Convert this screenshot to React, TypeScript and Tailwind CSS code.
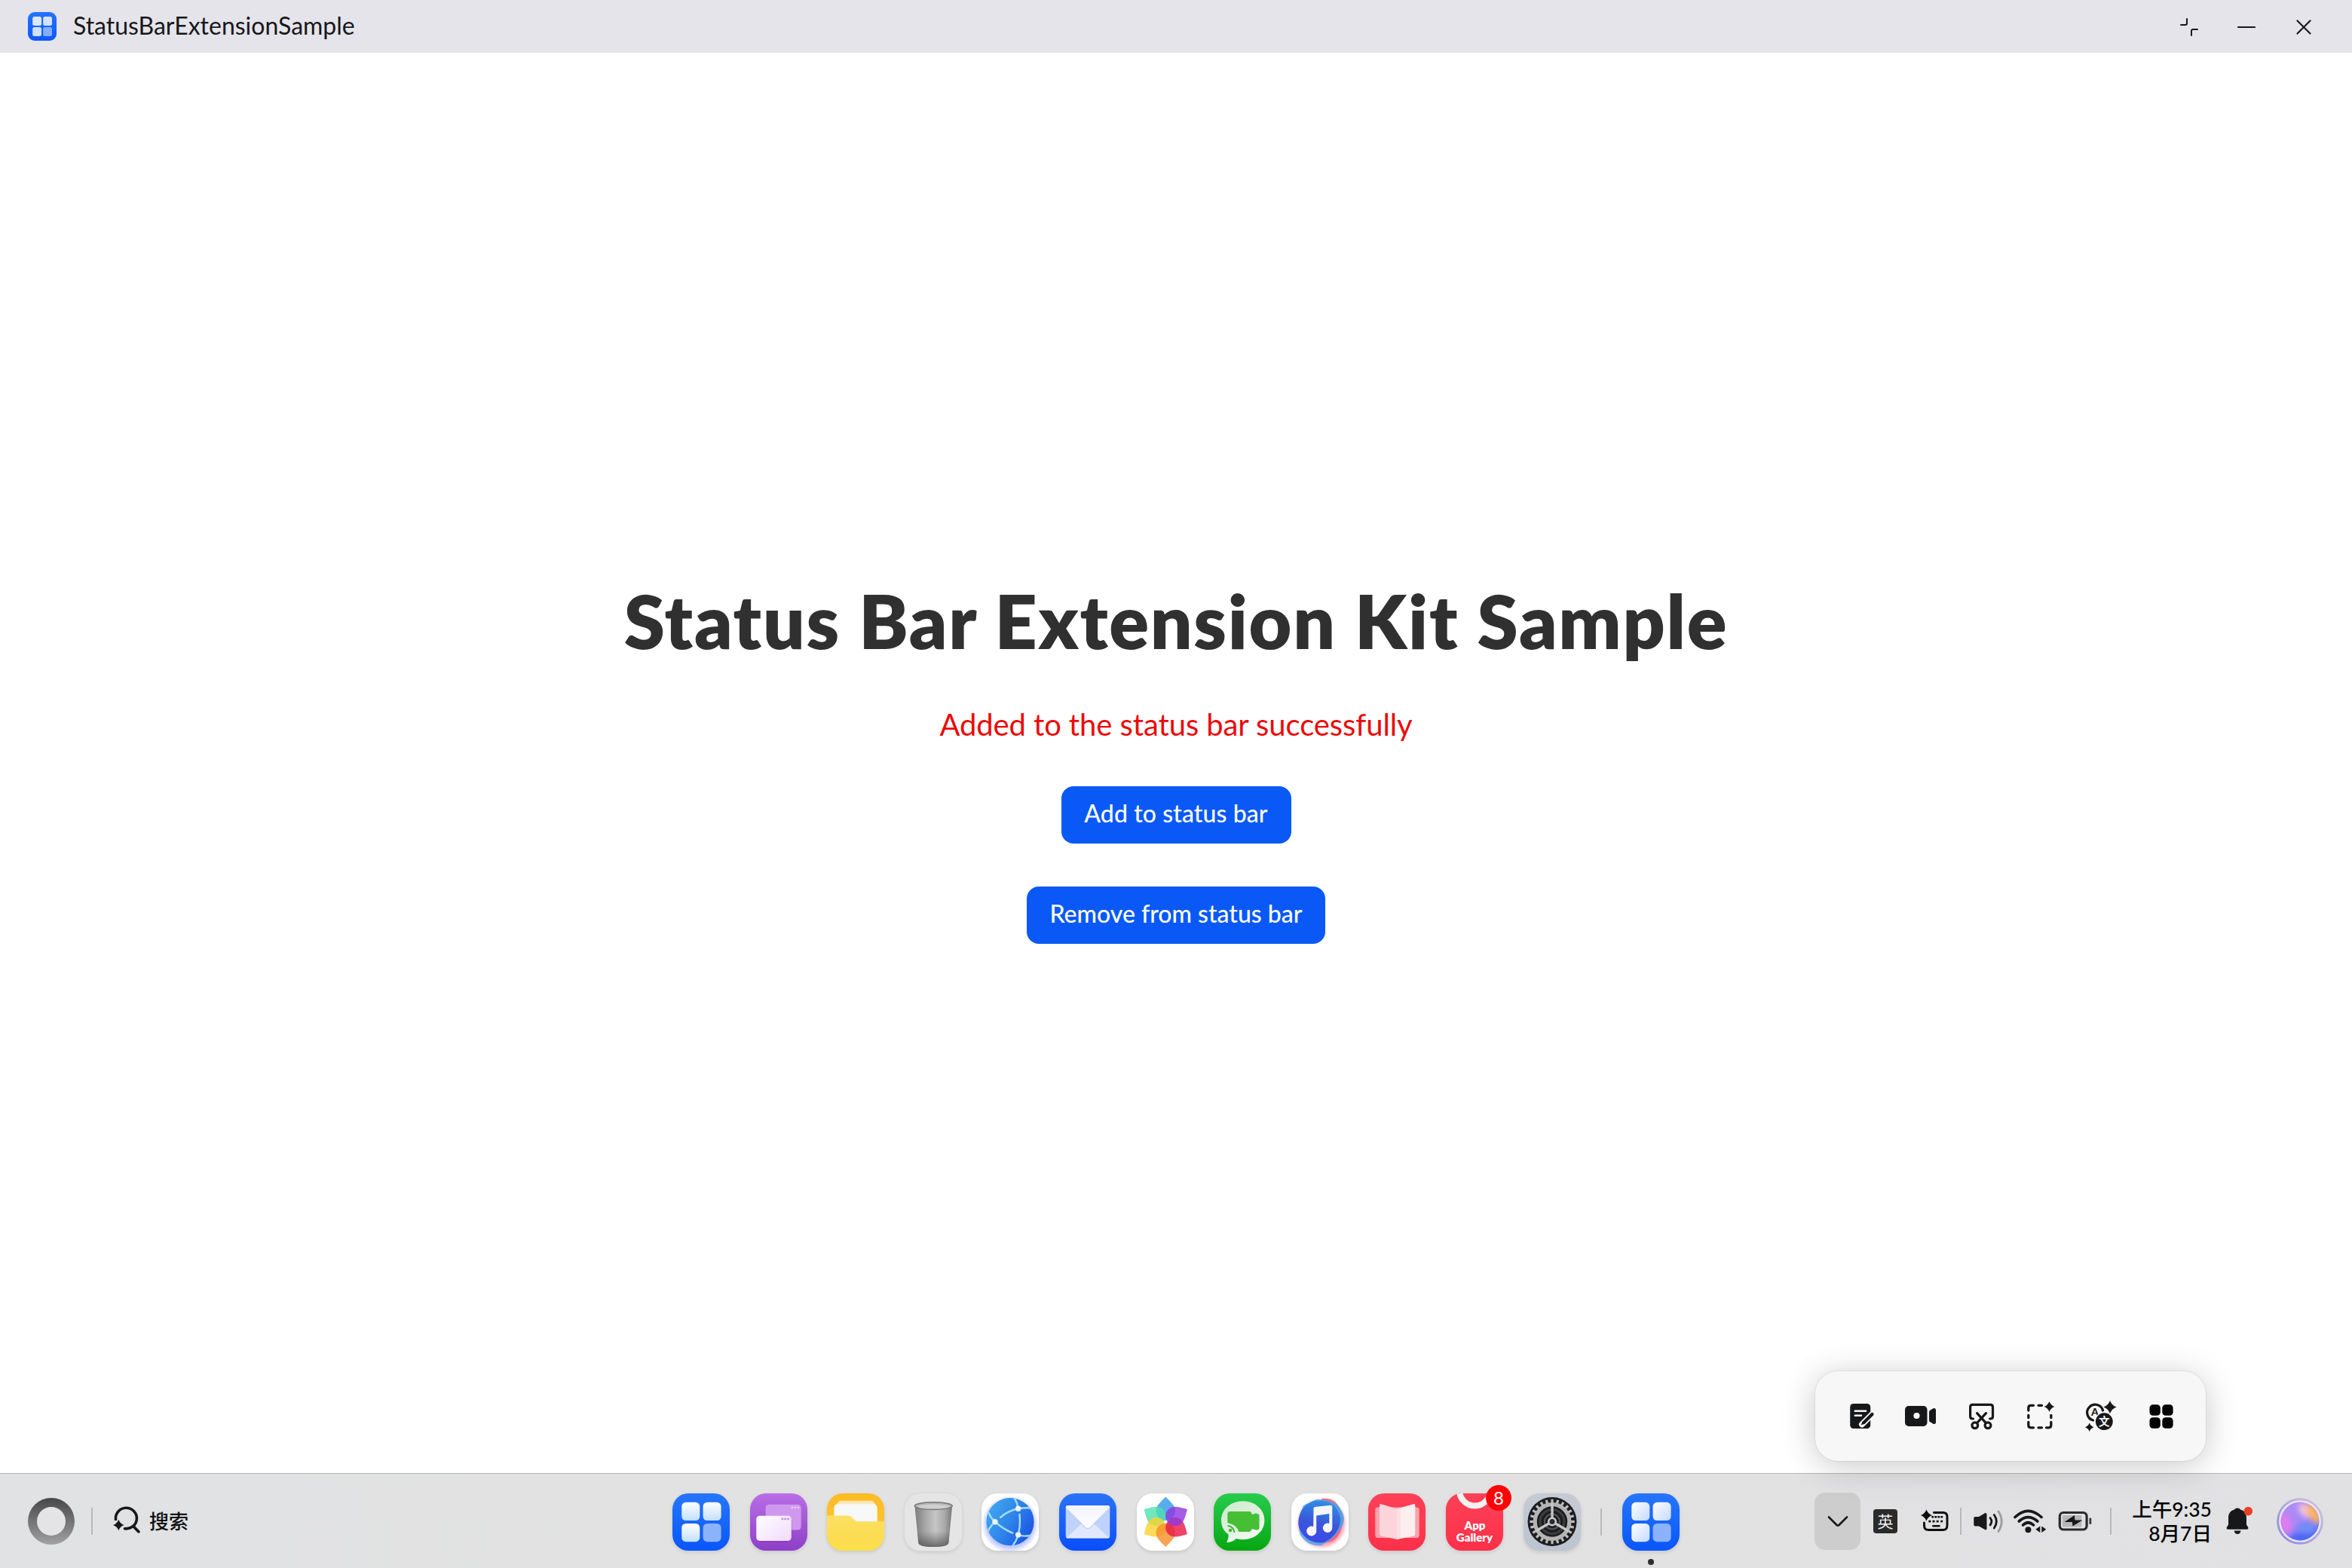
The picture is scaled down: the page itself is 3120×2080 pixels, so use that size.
import type { ReactNode } from "react";

const INK = "#17181a";

/** Four-pointed star centred on (x, y). */
function Sparkle({ x, y, r, fill = INK }: { x: number; y: number; r: number; fill?: string }) {
  const k = r * 0.26;
  return (
    <path
      fill={fill}
      d={`M${x} ${y - r}Q${x + k} ${y - k} ${x + r} ${y}Q${x + k} ${y + k} ${x} ${y + r}Q${x - k} ${y + k} ${x - r} ${y}Q${x - k} ${y - k} ${x} ${y - r}Z`}
    />
  );
}

function Divider({ className = "" }: { className?: string }) {
  return <div className={`h-9 w-0.5 shrink-0 bg-[#b9b9bc] ${className}`} />;
}

/* ---------- App tiles ---------- */

function Tile({ className, children }: { className: string; children: ReactNode }) {
  return (
    <div className={`size-[76px] shrink-0 overflow-hidden rounded-[21px] shadow-[0_2px_5px_rgba(0,0,0,0.12)] ${className}`}>
      <svg viewBox="0 0 76 76" className="size-full">
        {children}
      </svg>
    </div>
  );
}

function GridTile({ id, white }: { id: string; white?: boolean }) {
  return (
    <Tile className="bg-linear-to-b from-[#2676fb] to-[#0a55fa]">
      <defs>
        <linearGradient id={id} x1="0" y1="0" x2={white ? "1" : "0"} y2="1">
          <stop offset="0" stopColor="#ffffff" />
          <stop offset="1" stopColor={white ? "#c4d9ff" : "#c3dffb"} />
        </linearGradient>
      </defs>
      <rect x="12.3" y="11.8" width="24" height="24.2" rx="5.5" fill={`url(#${id})`} />
      <rect x="40.6" y="11.8" width="24" height="24.2" rx="5.5" fill={`url(#${id})`} />
      <rect x="12.3" y="40" width="24" height="24.2" rx="5.5" fill={`url(#${id})`} />
      <rect x="40.6" y="40" width="24" height="24.2" rx="5.5" fill="#8bb2fd" />
    </Tile>
  );
}

function WindowsTile() {
  return (
    <Tile className="bg-linear-to-b from-[#b96ee6] to-[#8d3fc6]">
      <defs>
        <linearGradient id="win" x1="0" y1="0" x2="1" y2="1">
          <stop offset="0" stopColor="#ffffff" />
          <stop offset="1" stopColor="#f0d9fc" />
        </linearGradient>
      </defs>
      <rect x="20.7" y="14.7" width="47" height="33.8" rx="4.5" fill="#cf98ee" />
      {[55.9, 59.9, 63.9].map((x) => (
        <circle key={x} cx={x} cy="18.8" r="1.5" fill="#e6c5f7" />
      ))}
      <rect x="9" y="31.5" width="46.5" height="33.4" rx="4.5" fill="#7a2fb5" opacity="0.35" />
      <rect x="8.3" y="29.7" width="46.5" height="33.4" rx="4.5" fill="url(#win)" />
      {[42.8, 46.7, 50.6].map((x) => (
        <circle key={x} cx={x} cy="33.8" r="1.6" fill="#c98be8" />
      ))}
    </Tile>
  );
}

function FilesTile() {
  return (
    <Tile className="bg-linear-to-b from-[#fdbb22] to-[#fcc93c]">
      <defs>
        <linearGradient id="folder" x1="0" y1="0" x2="0" y2="1">
          <stop offset="0" stopColor="#fde064" />
          <stop offset="0.6" stopColor="#fcdc52" />
          <stop offset="1" stopColor="#fce04a" />
        </linearGradient>
      </defs>
      <path d="M13 14L16 10.5Q17 9.7 18 9.7H59Q60.5 9.7 61 10.5L64 14V30H13Z" fill="#fde6b8" />
      <path d="M9.3 19Q10 14.5 14.5 14.3H61.5Q66 14.5 66.7 19V45H9.3Z" fill="#f8f8f8" />
      <path d="M0 29.5H27Q30.5 29.5 32.5 31.5L37 35.8Q38.5 37.3 41 37.3H76V76H0Z" fill="url(#folder)" />
    </Tile>
  );
}

function TrashTile() {
  return (
    <Tile className="bg-[#e5e5e5] ring-1 ring-[#d9d9d9]">
      <defs>
        <linearGradient id="can" x1="0" y1="0" x2="1" y2="0">
          <stop offset="0" stopColor="#7b7b7b" />
          <stop offset="0.25" stopColor="#a3a3a3" />
          <stop offset="0.55" stopColor="#c6c6c6" />
          <stop offset="0.8" stopColor="#a9a9a9" />
          <stop offset="1" stopColor="#787878" />
        </linearGradient>
        <linearGradient id="canFoot" x1="0" y1="0" x2="0" y2="1">
          <stop offset="0.6" stopColor="#555" stopOpacity="0" />
          <stop offset="1" stopColor="#444" stopOpacity="0.7" />
        </linearGradient>
      </defs>
      <path d="M13.6 18L18.2 65.5Q19 71 38.3 71Q57.6 71 58.4 65.5L63 18Z" fill="url(#can)" />
      <path d="M13.6 18L18.2 65.5Q19 71 38.3 71Q57.6 71 58.4 65.5L63 18Z" fill="url(#canFoot)" />
      <ellipse cx="38.3" cy="16.6" rx="25" ry="4.8" fill="#b5b5b5" stroke="#777" strokeWidth="1.6" />
      <ellipse cx="38.3" cy="17.6" rx="21" ry="3" fill="#cfcfcf" />
    </Tile>
  );
}

function BrowserTile() {
  return (
    <Tile className="bg-white">
      <defs>
        <linearGradient id="globe" x1="0" y1="0.2" x2="1" y2="0.8">
          <stop offset="0" stopColor="#42a9ee" />
          <stop offset="0.5" stopColor="#2f83ea" />
          <stop offset="1" stopColor="#1a4fe3" />
        </linearGradient>
        <radialGradient id="globeGlow">
          <stop offset="0.8" stopColor="#8b9cff" stopOpacity="0.55" />
          <stop offset="1" stopColor="#8b9cff" stopOpacity="0" />
        </radialGradient>
        <clipPath id="globeClip">
          <circle cx="38" cy="37.7" r="31.6" />
        </clipPath>
      </defs>
      <circle cx="38" cy="41" r="38" fill="url(#globeGlow)" />
      <circle cx="38" cy="37.7" r="31.6" fill="url(#globe)" />
      <g clipPath="url(#globeClip)" fill="none" stroke="#9fe0fc" strokeWidth="2.4" strokeLinecap="round">
        <path d="M43 5Q47.5 12 48.7 20.3" />
        <path d="M25 32Q35 23 48.7 20.3Q58 18.5 71 19.8" />
        <path d="M50.4 28Q52 42 48.7 55Q46.5 63 41 70" />
        <path d="M9.5 26Q12.5 33 18 37.7Q28 47 41.3 52.7" />
        <path d="M18 37.7Q11 44 8 52" />
        <path d="M48.7 55Q58 58.5 71 54.5" />
      </g>
      {[[48.7, 20.3], [18, 37.7], [48.7, 55]].map(([x, y]) => (
        <circle key={y} cx={x} cy={y} r="3.7" fill="#eef4f8" />
      ))}
    </Tile>
  );
}

function MailTile() {
  return (
    <Tile className="bg-linear-to-b from-[#2b72f6] to-[#0a4dfb]">
      <defs>
        <linearGradient id="flap" x1="0" y1="0" x2="0" y2="1">
          <stop offset="0" stopColor="#f3f3ff" />
          <stop offset="1" stopColor="#fdfdff" />
        </linearGradient>
      </defs>
      <rect x="8.7" y="17" width="58.6" height="44" rx="3.5" fill="#0736b4" opacity="0.35" />
      <rect x="8.7" y="16" width="58.6" height="43.6" rx="3" fill="#bfd2fb" />
      <path d="M9.5 59L30 40H46L66.5 59Q66 59.6 64.5 59.6H11.5Q10 59.6 9.5 59Z" fill="#dfe8ff" />
      <path d="M8.9 18.3L33.5 45Q38 49 42.5 45L67.1 18.3Z" fill="#8eaef0" opacity="0.55" />
      <path d="M8.7 18.4Q9 16 11.5 16H64.5Q67 16 67.3 18.4L41.5 44.5Q38 47.5 34.5 44.5Z" fill="url(#flap)" />
    </Tile>
  );
}

const PETALS: [number, string][] = [
  [0, "#2f97e8"],
  [300, "#4fe0ae"],
  [240, "#fbd22c"],
  [180, "#f68d2a"],
  [120, "#e81742"],
  [60, "#9036de"],
];

function GalleryTile() {
  return (
    <Tile className="bg-white">
      <g transform="translate(38.3 37.7)">
        {PETALS.map(([a, c]) => (
          <path
            key={a}
            transform={`rotate(${a})`}
            fill={c}
            opacity="0.8"
            d="M-1.3 -32Q0 -33.4 1.3 -32C5 -27.5 12.8 -22 12.8 -14.5C12.8 -7 7 -2 0 -2C-7 -2 -12.8 -7 -12.8 -14.5C-12.8 -22 -5 -27.5 -1.3 -32Z"
          />
        ))}
      </g>
    </Tile>
  );
}

function MeetTile() {
  return (
    <Tile className="bg-linear-to-b from-[#27cc4d] to-[#05a70a]">
      <defs>
        <linearGradient id="bubble" x1="0" y1="0" x2="0.6" y2="1">
          <stop offset="0" stopColor="#cdeccb" />
          <stop offset="0.5" stopColor="#dcf0dc" />
          <stop offset="1" stopColor="#f2faf2" />
        </linearGradient>
      </defs>
      <path
        d="M38.7 10.3C55 10.3 67.4 21.5 67.4 35.7C67.4 50 55 61.2 38.7 61.2Q34 61.2 30 60Q25.5 64.5 18.6 65.2Q17 65 17.8 63.5Q20 60 19.5 54.5C13 50 10 43 10 35.7C10 21.5 22.4 10.3 38.7 10.3Z"
        fill="url(#bubble)"
      />
      <path
        d="M21.5 24H47Q50.3 24 50.7 28L56 26.5Q60.5 27 60.5 29.5V46.5Q60 49 56 48.6L50.7 47Q50 51 46.5 51H33Q31 41.5 18.3 39V27.5Q18.3 24 21.5 24Z"
        fill="#47bf35"
      />
      <path d="M18.5 43Q26.5 44 27.5 52" fill="none" stroke="#3fb832" strokeWidth="2" />
      <circle cx="22" cy="49" r="2.3" fill="#3fb832" />
    </Tile>
  );
}

function MusicTile() {
  return (
    <Tile className="bg-white">
      <defs>
        <linearGradient id="disc" x1="0.6" y1="0" x2="0.4" y2="1">
          <stop offset="0" stopColor="#2f8fe6" />
          <stop offset="0.55" stopColor="#3a55dc" />
          <stop offset="1" stopColor="#3c49e6" />
        </linearGradient>
        <filter id="soft" x="-20%" y="-20%" width="140%" height="140%">
          <feGaussianBlur stdDeviation="2.2" />
        </filter>
      </defs>
      <circle cx="40" cy="40" r="31" fill="#ff5f7c" opacity="0.6" filter="url(#soft)" />
      <path d="M40 7Q58 5 64 20Q72 32 66 48Q60 66 44 65Z" fill="#f2596f" opacity="0.85" />
      <path d="M33 8Q60 8 66 22Q74 34 66 46Q58 60 40 69Q22 71 12 55Q6 38 16 16Z" fill="#3fa6ee" opacity="0.8" />
      <path d="M36 9.5C52 9 62 18 65 32C66 48 55 60 43 65C28 68 13 58 9.5 42C8 24 20 10 36 9.5Z" fill="url(#disc)" />
      <path
        d="M29.5 19.8Q29.7 18.3 31.2 18L52 15.8Q54.3 15.8 54.3 18V45.5A6.2 6.2 0 1 1 50.3 40V27L33.2 29.5V49.5A6.5 6.5 0 1 1 29.2 44Z"
        fill="#f6f6fa"
      />
    </Tile>
  );
}

function ReaderTile() {
  return (
    <Tile className="bg-linear-to-b from-[#fd4157] to-[#fc2f49]">
      <rect x="9.2" y="18.5" width="58.5" height="40.5" rx="3.5" fill="#f9a3ae" />
      <path d="M15 16Q15 13.5 17.5 14.3L38 20.5V61L18 56.8Q15 56 15 53.5Z" fill="#fbd5d9" />
      <path d="M62.3 16Q62.3 13.5 59.8 14.3L38 20.5V61L59.5 56.8Q62.3 56 62.3 53.5Z" fill="#fdeeef" />
      <path d="M38 20.5L43 19V60L38 61Z" fill="#fde0e3" />
    </Tile>
  );
}

function StoreTile() {
  return (
    <div className="relative shrink-0">
      <Tile className="bg-linear-to-b from-[#fd4157] to-[#fc2f49]">
        <path d="M18 -4A20.3 20.3 0 1 0 59 -4" fill="none" stroke="#f6f1f1" strokeWidth="8" />
        <g fill="#ffffff" fontFamily="Lato, sans-serif" fontWeight="800" fontSize="15" textAnchor="middle">
          <text x="38.5" y="47.5">App</text>
          <text x="38" y="63.5">Gallery</text>
        </g>
      </Tile>
      <span className="absolute -top-[11px] left-[53px] flex size-[34px] items-center justify-center rounded-full bg-[#fb0606] text-[24px] leading-none text-white">
        8
      </span>
    </div>
  );
}

function SettingsTile() {
  const teeth = Array.from({ length: 24 }, (_, i) => i * 15);
  return (
    <Tile className="bg-linear-to-b from-[#c6cbd3] to-[#bcc4cf]">
      <circle cx="38" cy="37.5" r="32.5" fill="#1d1e20" />
      {teeth.map((a) => (
        <rect key={a} x="36.4" y="7.8" width="3.2" height="6" fill="#bdbdbd" transform={`rotate(${a} 38 37.5)`} />
      ))}
      <circle cx="38" cy="37.5" r="22.8" fill="none" stroke="#b4b4b4" strokeWidth="5.2" />
      <circle cx="38" cy="37.5" r="16" fill="none" stroke="#3c3d40" strokeWidth="3" />
      <circle cx="38" cy="37.5" r="10" fill="none" stroke="#55565a" strokeWidth="2" />
      {[0, 120, 240].map((a) => (
        <path key={a} d="M38 32V13" stroke="#c6c6c6" strokeWidth="3.4" transform={`rotate(${a} 38 37.5)`} />
      ))}
      <circle cx="38" cy="37.5" r="4.8" fill="#2a2b2d" stroke="#c9c9c9" strokeWidth="2.6" />
    </Tile>
  );
}

/* ---------- Window chrome ---------- */

function TitleBar() {
  return (
    <header className="flex h-[70px] shrink-0 items-center bg-[#e5e4ea] pr-[52px] pl-[37px]">
      <div className="size-[38px] overflow-hidden rounded-[9px] bg-linear-to-b from-[#2673fb] to-[#0d57f9]">
        <svg viewBox="0 0 38 38" className="size-full">
          <rect x="6.2" y="6" width="11.8" height="12" rx="2.5" fill="#dbe8ff" />
          <rect x="20.2" y="6" width="11.8" height="12" rx="2.5" fill="#d3e2ff" />
          <rect x="6.2" y="20" width="11.8" height="12" rx="2.5" fill="#cfe0ff" />
          <rect x="20.2" y="20" width="11.8" height="12" rx="2.5" fill="#85adfd" />
        </svg>
      </div>
      <h2 className="ml-[22px] pb-[3px] text-[32px] leading-10 text-[#18181b]">StatusBarExtensionSample</h2>
      <div className="ml-auto flex items-center gap-[52px] pt-0.5">
        <svg viewBox="0 0 24 24" className="size-6" fill="none" stroke={INK} strokeWidth="2" strokeLinecap="round" strokeLinejoin="round">
          <path d="M9 1V7Q9 9 7 9H1" />
          <path d="M15 23V17Q15 15 17 15H23" />
        </svg>
        <svg viewBox="0 0 24 24" className="size-6" stroke={INK} strokeWidth="2.2" strokeLinecap="round">
          <path d="M1 12H23" />
        </svg>
        <svg viewBox="0 0 24 24" className="size-6" stroke={INK} strokeWidth="2.2" strokeLinecap="round">
          <path d="M3.5 3.5L20.5 20.5M20.5 3.5L3.5 20.5" />
        </svg>
      </div>
    </header>
  );
}

/* ---------- Status bar extension tray ---------- */

function TrayIcon({ children }: { children: ReactNode }) {
  return (
    <svg viewBox="0 0 80 80" className="size-20 shrink-0">
      {children}
    </svg>
  );
}

function Tray() {
  return (
    <div className="absolute right-[194px] bottom-[142px] flex h-[119px] w-[518px] items-center rounded-[30px] bg-[#f7f7f7] pl-5 shadow-[0_6px_44px_rgba(0,0,0,0.22),0_0_1px_1px_rgba(0,0,0,0.06)]">
      <TrayIcon>
        <rect x="26.2" y="23" width="27" height="33" rx="4.5" fill={INK} />
        <path d="M32.8 32.7H47M32.8 38.7H41" stroke="#f7f7f7" strokeWidth="2.6" strokeLinecap="round" />
        <path d="M55.5 37L42 50.5" stroke="#f7f7f7" strokeWidth="8" strokeLinecap="round" />
        <path d="M55.5 37L44.5 48" stroke={INK} strokeWidth="4.2" strokeLinecap="round" />
        <path d="M42.7 46.5L46 49.5L40.5 51.6Z" fill={INK} />
      </TrayIcon>
      <TrayIcon>
        <rect x="19" y="26" width="29.5" height="27" rx="5" fill={INK} />
        <circle cx="34.5" cy="39" r="4.1" fill="#f7f7f7" />
        <path d="M51 34Q51 32.8 52 32L56.5 29.2Q60 28 60 31.5V47.5Q60 51 56.5 49.8L52 47Q51 46.3 51 45Z" fill={INK} />
      </TrayIcon>
      <TrayIcon>
        <g fill="none" stroke={INK} strokeWidth="3.2" strokeLinecap="round">
          <path d="M29.5 43H28.5Q25.6 43 25.6 40V27.5Q25.6 24.4 28.6 24.4H52.5Q55.5 24.4 55.5 27.5V40Q55.5 43 52.6 43H51.6" />
          <path d="M46.5 35.7L34.5 48.7M34.6 35.7L46.4 48.7" />
          <circle cx="31.8" cy="51.8" r="3.9" />
          <circle cx="49" cy="51.8" r="3.9" />
        </g>
      </TrayIcon>
      <TrayIcon>
        <g fill="none" stroke={INK} strokeWidth="3.3" strokeLinecap="round">
          <path d="M22.8 32V28.5Q22.8 25.3 26 25.3H29.5" />
          <path d="M36 25.3H40.5M22.8 38.3V41.7M52.8 38.3V41.7M36 54.8H40.5" />
          <path d="M22.8 47.5V51.6Q22.8 54.8 26 54.8H29.5" />
          <path d="M46.5 54.8H49.6Q52.8 54.8 52.8 51.6V47.5" />
        </g>
        <Sparkle x={50.5} y={27} r={7} />
      </TrayIcon>
      <TrayIcon>
        <path d="M28.5 45A10.6 10.6 0 1 1 41.5 32" fill="none" stroke={INK} strokeWidth="3.2" strokeLinecap="round" />
        <text x="31" y="39.3" textAnchor="middle" fontFamily="Lato, sans-serif" fontWeight="900" fontSize="14" fill={INK}>A</text>
        <circle cx="43.3" cy="46.7" r="12.6" fill="#f7f7f7" />
        <circle cx="43.3" cy="46.7" r="11.4" fill={INK} />
        <text x="43.3" y="52" textAnchor="middle" fontFamily="'Noto Sans CJK SC', sans-serif" fontWeight="700" fontSize="14.5" fill="#f7f7f7">文</text>
        <Sparkle x={51} y={27.5} r={8.6} />
        <Sparkle x={23.7} y={54.3} r={5.8} />
      </TrayIcon>
      <TrayIcon>
        {[[23.5, 24.3], [40.3, 24.3], [23.5, 41.3], [40.3, 41.3]].map(([x, y]) => (
          <rect key={`${x}-${y}`} x={x} y={y} width="14.3" height="14.5" rx="4.5" fill="#000000" />
        ))}
      </TrayIcon>
    </div>
  );
}

/* ---------- Taskbar ---------- */

function SearchArea() {
  return (
    <div className="flex items-center pl-[37px]">
      <div className="flex size-[62px] items-center justify-center rounded-full bg-linear-to-b from-[#48484a] to-[#a2a2a4]">
        <div className="size-[38px] rounded-full bg-[#e4e4e6]" />
      </div>
      <Divider className="ml-[22px]" />
      <svg viewBox="0 0 40 40" className="-mt-px ml-[25px] size-10">
        <path d="M5.5 18.5A14 13.8 0 1 1 17.5 30.7" fill="none" stroke={INK} strokeWidth="3.6" strokeLinecap="round" />
        <path d="M29.2 28L35.8 34.8" stroke={INK} strokeWidth="3.8" strokeLinecap="round" />
        <Sparkle x={9.3} y={26} r={7.3} />
      </svg>
      <span className="ml-2.5 text-[26px] leading-9 font-medium text-[#101012]">搜索</span>
    </div>
  );
}

function Dock() {
  return (
    <div className="flex items-center gap-[26.6px] pt-0.5">
      <GridTile id="gridA" />
      <WindowsTile />
      <FilesTile />
      <TrashTile />
      <BrowserTile />
      <MailTile />
      <GalleryTile />
      <MeetTile />
      <MusicTile />
      <ReaderTile />
      <StoreTile />
      <SettingsTile />
      <Divider />
      <div className="relative">
        <GridTile id="gridB" white />
        <span className="absolute -bottom-[19px] left-[34px] size-2 rounded-full bg-[#2e2e2e]" />
      </div>
    </div>
  );
}

function StatusArea() {
  return (
    <div className="flex items-center">
      <button className="flex h-[76px] w-[61px] shrink-0 items-center justify-center rounded-[14px] bg-[#cdcdcd]">
        <svg viewBox="0 0 30 20" className="h-5 w-[30px]" fill="none" stroke={INK} strokeWidth="2.6" strokeLinecap="round" strokeLinejoin="round">
          <path d="M3 4.5L13.5 15Q15 16.3 16.5 15L27 4.5" />
        </svg>
      </button>
      <span className="ml-[17px] flex size-8 shrink-0 items-center justify-center rounded-[4px] bg-[#2a2a2b] text-[21px] leading-none text-[#f0f0f0]">
        英
      </span>
      <svg viewBox="0 0 40 40" className="ml-[30px] size-10 shrink-0">
        <path d="M18.5 8.5H30.5Q36 8.5 36 14V25.5Q36 31.5 30.5 31.5H11Q5.5 31.5 5.5 25.5V22" fill="none" stroke="#0c0c0d" strokeWidth="2.9" strokeLinecap="round" />
        <g fill="#0c0c0d">
          {[16.8, 20.8, 24.8, 28.8].map((x) => (
            <rect key={x} x={x - 1.4} y="13" width="2.8" height="2.6" rx="0.6" />
          ))}
          {[12.8, 18, 23.2, 28.6].map((x) => (
            <rect key={x} x={x - 1.5} y="18.8" width="3" height="2.6" rx="0.6" />
          ))}
        </g>
        <path d="M17.3 26.3H25.5" stroke="#0c0c0d" strokeWidth="2.4" strokeLinecap="round" />
        <Sparkle x={8.4} y={12} r={7.6} fill="#0c0c0d" />
      </svg>
      <Divider className="ml-[13px]" />
      <svg viewBox="0 0 44 40" className="ml-3.5 h-10 w-11 shrink-0">
        <path d="M2.3 16Q2.3 14 4.3 14H9L17 9.3Q19.5 8.2 19.5 11V29.5Q19.5 32.3 17 31L9 26.5H4.3Q2.3 26.5 2.3 24.5Z" fill={INK} />
        <g fill="none" stroke={INK} strokeWidth="2.8" strokeLinecap="round">
          <path d="M24 15.5Q27.8 20.3 24 25" />
          <path d="M29.3 11.5Q35.5 20.3 29.3 29" />
          <path d="M35 7Q43.5 20.3 35 33.5" stroke="#9c9c9e" />
        </g>
      </svg>
      <svg viewBox="0 0 48 40" className="ml-2.5 h-10 w-12 shrink-0">
        <g fill="none" stroke={INK} strokeWidth="3.7" strokeLinecap="round">
          <path d="M3 14.5Q20.3 -1.8 38 14.5" />
          <path d="M8.3 20Q20.3 9.2 32.8 20" />
          <path d="M13.5 25Q20.3 18.5 27.5 25" />
        </g>
        <circle cx="20.4" cy="31.3" r="4" fill={INK} />
        <path d="M36.3 26.5V35L30.3 30.7ZM38.3 26.5V35L44.3 30.7Z" fill={INK} />
      </svg>
      <svg viewBox="0 0 50 40" className="ml-2.5 h-10 w-[50px] shrink-0">
        <rect x="4.3" y="8.5" width="35.8" height="22.5" rx="5" fill="none" stroke="#2a2a2c" strokeWidth="3.2" />
        <rect x="7.8" y="12" width="25.5" height="15.5" rx="1" fill="#b7b7b8" />
        <path d="M23.8 12L10.5 21H20.8L21.5 26.5L34.5 18.5H24.5Z" fill={INK} />
        <rect x="43.4" y="15.5" width="2.9" height="8.5" rx="1.2" fill="#3c3c3e" />
      </svg>
      <Divider className="ml-[21px]" />
      <div className="ml-[25px] w-[108px] shrink-0 text-right text-[26.5px] leading-8 font-medium whitespace-nowrap text-black">
        <p>上午9:35</p>
        <p>8月7日</p>
      </div>
      <svg viewBox="0 0 40 40" className="ml-[18px] size-10 shrink-0">
        <path
          d="M16 2.5Q19 2.5 20 4.5C25.5 6 28 10 28 15.5V24.5L30.2 28Q31 30.8 28.5 30.8H3.5Q1 30.8 1.8 28L4 24.5V15.5C4 10 6.5 6 12 4.5Q13 2.5 16 2.5Z"
          fill={INK}
        />
        <path d="M11.7 32.5H20.5Q19.8 37 16.1 37Q12.4 37 11.7 32.5Z" fill={INK} />
        <circle cx="30.3" cy="6.6" r="5.8" fill="#ea4125" />
      </svg>
      <svg viewBox="0 0 62 62" className="ml-7 size-[62px] shrink-0">
        <defs>
          <linearGradient id="orb" x1="0.1" y1="0.1" x2="0.7" y2="1">
            <stop offset="0" stopColor="#b08cf4" />
            <stop offset="0.5" stopColor="#a388f6" />
            <stop offset="1" stopColor="#4d6cf6" />
          </linearGradient>
          <linearGradient id="orbRim" x1="0" y1="1" x2="1" y2="0">
            <stop offset="0" stopColor="#8f86e6" />
            <stop offset="1" stopColor="#d0c8d6" />
          </linearGradient>
          <filter id="orbBlur" x="-50%" y="-50%" width="200%" height="200%">
            <feGaussianBlur stdDeviation="3.5" />
          </filter>
          <clipPath id="orbClip">
            <circle cx="31" cy="31" r="25.5" />
          </clipPath>
        </defs>
        <circle cx="31" cy="31" r="29.3" fill="#ece8f8" stroke="url(#orbRim)" strokeWidth="3" />
        <circle cx="31" cy="31" r="25.5" fill="url(#orb)" />
        <g clipPath="url(#orbClip)">
          <g filter="url(#orbBlur)">
            <ellipse cx="12" cy="34" rx="8" ry="14" fill="#e07cf0" transform="rotate(-15 12 34)" />
            <ellipse cx="38" cy="17" rx="7" ry="11" fill="#f3c4de" transform="rotate(-40 38 17)" />
            <ellipse cx="49" cy="21" rx="7" ry="15" fill="#fdb25a" transform="rotate(-32 49 21)" />
            <ellipse cx="32" cy="53" rx="15" ry="5" fill="#4a63f5" />
            <ellipse cx="40" cy="40" rx="11" ry="6" fill="#6d90f6" />
          </g>
        </g>
      </svg>
    </div>
  );
}

export default function App() {
  return (
    <div className="relative flex h-[2080px] w-[3120px] flex-col overflow-hidden bg-white font-['Lato','Noto_Sans_CJK_SC',sans-serif]">
      <TitleBar />
      <main className="flex flex-1 flex-col items-center pt-[688px]">
        <h1 className="h-[130px] text-[98px] leading-[130px] font-extrabold tracking-[1.7px] whitespace-nowrap text-[#303030]">
          Status Bar Extension Kit Sample
        </h1>
        <p className="mt-[49px] h-12 text-[40px] leading-[48px] tracking-[-0.1px] text-[#ea0a0a]">Added to the status bar successfully</p>
        <button className="mt-[58px] h-[76px] w-[305px] rounded-2xl bg-[#0a59f7] pb-[4px] text-[32px] font-medium tracking-[0.1px] text-white">
          Add to status bar
        </button>
        <button className="mt-[57px] h-[76px] w-[396px] rounded-2xl bg-[#0a59f7] pb-[4px] text-[32px] font-medium text-white">
          Remove from status bar
        </button>
      </main>
      <footer className="grid h-[126px] shrink-0 grid-cols-[892px_1515px_713px] border-t border-[#b4bab4] bg-linear-to-r from-[#e1e2e4] via-[#e2e2e2] via-30% to-[#e1e1e3]">
        <SearchArea />
        <Dock />
        <StatusArea />
      </footer>
      <Tray />
    </div>
  );
}
